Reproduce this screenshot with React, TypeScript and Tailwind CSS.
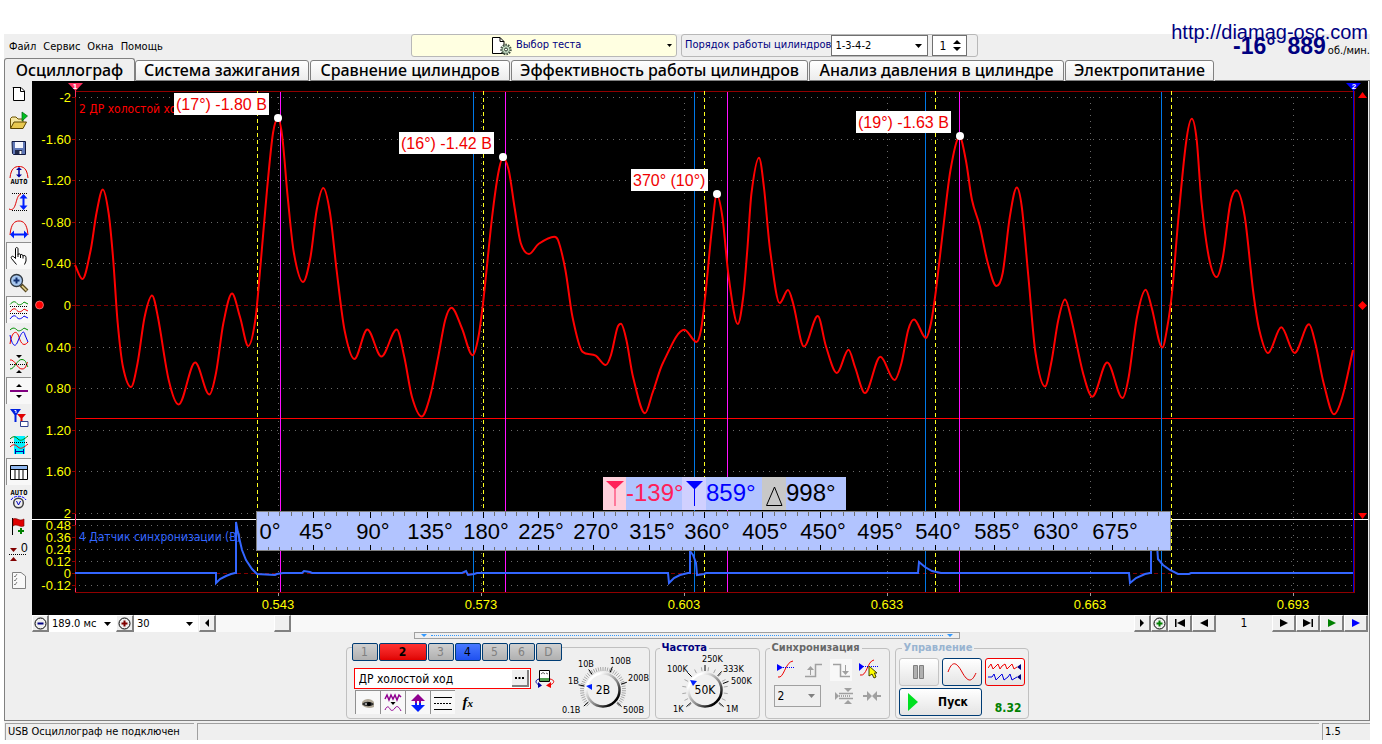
import React from "react";

const UI = "font-['DejaVu_Sans_Condensed','DejaVu_Sans',sans-serif]";

/* ---------- chart data ---------- */

type Pt = [number, number];

const PRESSURE: Pt[] = [
  [75, 265], [82.4, 279], [90.7, 250], [96.5, 213], [102.8, 189.5], [108.6, 213], [113, 257], [117.7, 323], [123, 367], [131, 387],
  [137.6, 363], [144.6, 317], [152, 295.5], [157.9, 317], [168.7, 380], [178.6, 404.5], [195.2, 362.5], [209.3, 394.5], [216, 373],
  [223.4, 323], [232, 293.5], [240, 317], [248.3, 346], [255.3, 320], [260.7, 263], [267, 190], [273, 133], [278, 119], [282.3, 137],
  [287.7, 197], [293.9, 253], [303, 282], [310.5, 257], [316.7, 210], [323.3, 188], [330, 213], [336.6, 270], [344.5, 330],
  [354.4, 359], [367.3, 329.5], [381.4, 356.5], [396.7, 329.5], [404.2, 356.5], [412, 397], [421.6, 416.5], [429.9, 397],
  [438.2, 357], [445.2, 320], [451.5, 307.7], [461.8, 328], [472.6, 355.3], [478.4, 337], [483.4, 300], [492.1, 217], [498.3, 173],
  [503, 158], [508.7, 170], [514.5, 207], [520.7, 243], [529, 254], [538.5, 244], [554.3, 236.7], [558, 240], [565.4, 270],
  [572.5, 317], [582.4, 351.7], [595.7, 355.7], [605.7, 365], [611, 355], [617.3, 328], [621, 323.7], [626.4, 340], [633, 376.7],
  [645, 413.3], [652.5, 393], [662.9, 363], [684.4, 329.7], [696.5, 342], [701, 330], [705.2, 296.7], [711.8, 230], [716.8, 195],
  [722.4, 217], [728.7, 277], [737.8, 324], [743.2, 297], [747.3, 250], [751.5, 193], [759, 157.7], [763.9, 187], [770.1, 250],
  [779.7, 303], [788, 290], [793, 303], [804, 346.5], [817.8, 316], [826, 346.5], [836.9, 373], [848.5, 349.7], [855, 367],
  [865, 393], [880.4, 356.7], [894.5, 380], [901.5, 363], [908.2, 330], [914, 319.5], [926, 338], [931, 323], [936, 290],
  [943, 230], [950.5, 170], [959.6, 137], [965.8, 160], [972, 200], [979.5, 225], [987.8, 263], [996.5, 286], [1002.7, 273],
  [1009.8, 217], [1016.8, 187.5], [1021.8, 207], [1028.4, 277], [1035.5, 353], [1045, 386.5], [1051.2, 363], [1058.3, 320],
  [1065, 299.5], [1071.5, 320], [1083, 373], [1092.3, 396.7], [1107.2, 362.5], [1122.5, 398], [1128.7, 377], [1137, 317],
  [1145.7, 289.7], [1151.5, 307], [1162.3, 347.5], [1167.3, 327], [1172.3, 290], [1178.5, 217], [1186, 143], [1191.8, 118.7],
  [1196.7, 140], [1201.3, 200], [1208.8, 257], [1216.6, 277], [1222.9, 257], [1230.3, 203], [1236.5, 190.3], [1244.8, 217],
  [1253, 290], [1259.3, 330], [1268, 353], [1281.3, 327.3], [1294.6, 353], [1309, 324.3], [1315.3, 343], [1323.6, 383],
  [1334, 414.3], [1342.3, 397], [1353, 350],
];

/* Monotone cubic interpolation: extrema stay exactly at the sampled points. */
function smooth(p: Pt[]): string {
  const n = p.length;
  const d: number[] = [];
  for (let i = 0; i < n - 1; i++) d.push((p[i + 1][1] - p[i][1]) / (p[i + 1][0] - p[i][0]));
  const m: number[] = [d[0]];
  for (let i = 1; i < n - 1; i++) {
    if (d[i - 1] * d[i] <= 0) {
      m.push(0);
      continue;
    }
    const mean = (p[i + 1][1] - p[i - 1][1]) / (p[i + 1][0] - p[i - 1][0]);
    const cap = 3 * Math.min(Math.abs(d[i - 1]), Math.abs(d[i]));
    m.push(Math.sign(mean) * Math.min(Math.abs(mean), cap));
  }
  m.push(d[n - 2]);
  let s = `M${p[0][0]} ${p[0][1]}`;
  for (let i = 0; i < n - 1; i++) {
    const h = (p[i + 1][0] - p[i][0]) / 3;
    s += `C${(p[i][0] + h).toFixed(1)} ${(p[i][1] + m[i] * h).toFixed(1)} ${(p[i + 1][0] - h).toFixed(1)} ${(p[i + 1][1] - m[i + 1] * h).toFixed(1)} ${p[i + 1][0]} ${p[i + 1][1]}`;
  }
  return s;
}

const SYNC =
  "75,573 216,573 216,583 220,579 226,576 231,574 235,573 236,573 236,522 238,533 242,550 246,560 252,569 257,574 275,575 277,574 283,573 302,573 304,571 310,572 312,573 462,573 466,571 468,575 474,574 477,573 668,573 669,583 674,578 680,575 688,573 690,573 690,551 693,555 696,563 697,575 704,574 706,573 918,573 919,562 925,567 932,571 941,573 1129,573 1130,583 1136,578 1145,574 1150,573 1151,573 1151,545 1157,545 1158,559 1163,565 1170,570 1178,574 1189,574 1191,573 1353,573";

const Y_MAIN: [string, number][] = [
  ["-2", 97], ["-1.60", 139], ["-1.20", 180], ["-0.80", 222], ["-0.40", 263], ["0", 305], ["0.40", 347], ["0.80", 388],
  ["1.20", 430], ["1.60", 471], ["2", 513],
];
const Y_SYNC: [string, number][] = [["0.48", 525], ["0.36", 537], ["0.24", 549], ["0.12", 561], ["0", 573], ["-0.12", 585]];
const X_AXIS: [string, number][] = [["0.543", 278], ["0.573", 481], ["0.603", 684], ["0.633", 887], ["0.663", 1090], ["0.693", 1293]];
const RULER = [257, 313, 370, 427, 483, 538, 593, 649, 704, 762, 820, 877, 935, 994, 1053, 1112, 1170];
const PEAKS = [
  { box: 174, top: 93, w: 95, text: "(17°) -1.80 В", cx: 278, cy: 118 },
  { box: 399, top: 132, w: 95, text: "(16°) -1.42 В", cx: 503, cy: 157 },
  { box: 631, top: 169, w: 77, text: "370° (10°)", cx: 717, cy: 194 },
  { box: 856, top: 111, w: 95, text: "(19°) -1.63 В", cx: 960, cy: 136 },
];

function Chart() {
  const f = "'Liberation Sans', sans-serif";
  return (
    <svg viewBox="32 81 1336 534" className="block h-auto w-full bg-black" role="img" aria-label="Осциллограмма" fontFamily={f}>
      <g shapeRendering="crispEdges" fill="none">
        <g stroke="#6a6a6a" strokeDasharray="1 5">
          {[...Y_MAIN, ...Y_SYNC].filter(([t]) => t !== "0").map(([t, y]) => (
            <path key={t + y} d={`M79 ${y}.5H1353`} />
          ))}
          {X_AXIS.map(([t, x]) => (
            <path key={t} d={`M${x}.5 97V592`} />
          ))}
        </g>
        <path d="M76 305.5H1353M76 573.5H1353" stroke="#800000" strokeDasharray="4 3" />
        <path d="M75.5 91V592.5H1354.5V91.5H75" stroke="#900000" />
        {[...Y_MAIN, ...Y_SYNC].map(([t, y]) => (
          <path key={t + y} d={`M72 ${y}.5H75`} stroke="#900000" />
        ))}
        {X_AXIS.map(([t, x]) => (
          <path key={t} d={`M${x}.5 593V596`} stroke="#a0a0a0" />
        ))}
        <path d="M32 519.5H1368" stroke="#fff" />
        <path d="M75.5 514V525M75.5 588V592M75.5 90V97" stroke="#ff3060" />
        <path d="M1353.5 90V592" stroke="#0000e0" />
      </g>
      <g fontSize="13" fill="#ffff00" textAnchor="end">
        {Y_MAIN.map(([t, y]) => (
          <text key={t} x="71" y={y + 5}>{t}</text>
        ))}
        {Y_SYNC.map(([t, y]) => (
          <text key={t} x="71" y={y + 5}>{t}</text>
        ))}
      </g>
      <g fontSize="13" fill="#ffff00" textAnchor="middle">
        {X_AXIS.map(([t, x]) => (
          <text key={t} x={x} y="609">{t}</text>
        ))}
      </g>
      <g fontSize="12" fontFamily="'DejaVu Sans Condensed', sans-serif">
        <text x="79" y="113" fill="#ff0000">2 ДР холостой ход (В)</text>
        <text x="79" y="541" fill="#3366ff">4 Датчик синхронизации (В)</text>
      </g>
      <path d="M76 418.5H1354" stroke="#ff0000" strokeWidth="1" shapeRendering="crispEdges" />
      <g shapeRendering="crispEdges">
        <path d="M473.5 92V592M694.5 92V592M925.5 92V592M1161.5 92V592" stroke="#0078e8" />
        <path d="M280.5 92V592M505.5 92V592M727.5 92V592M959.5 92V592" stroke="#ff10ff" />
        <path d="M257.5 91V592M483.5 91V592M704.5 91V592M935.5 91V592M1171.5 91V592" stroke="#ffff20" strokeDasharray="4 3" />
      </g>
      <path d={smooth(PRESSURE)} fill="none" stroke="#ff0000" strokeWidth="2" />
      <polyline points={SYNC} fill="none" stroke="#3366ff" strokeWidth="2" />

      {PEAKS.map((p) => (
        <g key={p.text}>
          <rect x={p.box} y={p.top} width={p.w} height="22" fill="#fff" />
          <text x={p.box + 2} y={p.top + 17} fontSize="16" fill="#f00000">{p.text}</text>
          <circle cx={p.cx} cy={p.cy} r="4" fill="#fff" />
        </g>
      ))}

      <rect x="256.5" y="511.5" width="914" height="39" fill="#b2c4ff" stroke="#808080" />
      <g shapeRendering="crispEdges" stroke="#707070">
        {RULER.slice(0, -1).map((x, i) =>
          [1, 2, 3, 4].map((k) => {
            const mx = Math.round(x + ((RULER[i + 1] - x) * k) / 5);
            return <path key={`${x}-${k}`} d={`M${mx}.5 512V516M${mx}.5 547V550`} />;
          }),
        )}
        {RULER.slice(1, -1).map((x) => (
          <path key={x} d={`M${x}.5 512V518M${x}.5 545V550`} stroke="#000" />
        ))}
      </g>
      <g fontSize="22" textAnchor="middle">
        {RULER.slice(0, -1).map((x, i) => (
          <text key={x} x={i === 0 ? 270 : x + 3} y="539">{i * 45}°</text>
        ))}
      </g>

      <rect x="603" y="477" width="243" height="33" fill="#b2c4ff" />
      <rect x="603" y="477" width="23" height="33" fill="#ffd0dc" />
      <text x="626" y="501" fontSize="24" fill="#ff2058">-139°</text>
      <rect x="682" y="477" width="24" height="33" fill="#d0d0ff" />
      <rect x="762" y="477" width="24" height="33" fill="#c8c8c8" />
      <path d="M606 481H624L615.5 489V506H614.5V489Z" fill="#ff2058" />
      <path d="M686 481H703L695 489V506H694V489Z" fill="#0000ff" />
      <path d="M774.5 487L782 505.5H766.5Z" fill="none" stroke="#000" />
      <text x="706" y="501" fontSize="24" fill="#0000ff">859°</text>
      <text x="786" y="501" fontSize="24">998°</text>

      <path d="M68 83H83L75.5 91Z" fill="#ff3060" />
      <path d="M1346 83H1361L1353.5 91Z" fill="#0000ff" />
      <g fontSize="8" fontWeight="bold" fill="#fff" textAnchor="middle">
        <text x="75" y="89">1</text>
        <text x="1354" y="89">2</text>
      </g>
      <path d="M1358 98H1367L1362.5 92ZM1358 513H1367L1362.5 519ZM1362.5 301L1367 305.5L1362.5 310L1358 305.5Z" fill="#ff0000" />
      <circle cx="39.5" cy="305" r="4" fill="#ff0000" stroke="#ff9090" strokeWidth="0.7" />
    </svg>
  );
}

/* ---------- icons ---------- */

function Ico({ children, w = 20, h = 20 }: { children: React.ReactNode; w?: number; h?: number }) {
  return (
    <svg width={w} height={h} viewBox={`0 0 ${w} ${h}`} fill="none" aria-hidden="true">
      {children}
    </svg>
  );
}

const hump = "M1 16C2 4 6 2 10 2S18 4 19 16";
const autoText = (y: number) => (
  <text x="10" y={y} fontSize="7" fontWeight="bold" textAnchor="middle" fill="#000" fontFamily="'DejaVu Sans Mono', monospace">AUTO</text>
);

const TOOLS: { name: string; on?: boolean; icon: React.ReactNode }[] = [
  { name: "Новый", icon: <Ico><path d="M4 3.5H12L15.5 7V16.5H4.500V3Z" fill="#fff" stroke="#000" /><path d="M11.500 3V7.500H16" stroke="#000" /></Ico> },
  { name: "Открыть", icon: <Ico><path d="M1.5 17V7.5L3 6H7L9 8H14V11" fill="#f6e7a0" stroke="#6b5200" /><path d="M1.5 17.5L5 11H17.5L14 17.5Z" fill="#e8c850" stroke="#5a4400" /><path d="M13 1L18.5 5L13 10Z" fill="#00c020" stroke="#006010" strokeWidth=".7" /></Ico> },
  { name: "Сохранить", icon: <Ico><path d="M3 3.5H16.5V16.5H4.5L3.5 15.5Z" fill="#6078b8" stroke="#101840" /><path d="M6 4H14V10H6Z" fill="#f4f6ff" /><path d="M6 12H13V16H6Z" fill="#202848" /><path d="M10.5 13H12.5V16H10.5Z" fill="#fff" /></Ico> },
  { name: "Автомасштаб", icon: <Ico><path d="M1 13C2 3 6 1.5 10 1.5S18 3 19 13" stroke="#e00000" /><path d="M10 3V11" stroke="#0000a0" strokeWidth="1.5" /><path d="M7 5L10 2L13 5ZM7 9.5L10 12.5L13 9.5Z" fill="#0000a0" />{autoText(19)}</Ico> },
  { name: "Масштаб по вертикали", icon: <Ico><path d="M3 1.5H18M3 18.5H18" stroke="#000" strokeDasharray="1 1" /><path d="M0 17C8 21 6 3 12 2" stroke="#e00000" /><path d="M14.5 4V16" stroke="#0020ff" strokeWidth="2" /><path d="M10.5 6.5L14.5 2L18.5 6.5ZM10.5 13.5L14.5 18L18.5 13.5Z" fill="#0020ff" /></Ico> },
  { name: "Масштаб по горизонтали", icon: <Ico><path d={hump} stroke="#e00000" /><path d="M4 15.5H16" stroke="#0020ff" strokeWidth="2" /><path d="M5 11.5L1 15.5L5 19.5ZM15 11.5L19 15.5L15 19.5Z" fill="#0020ff" /></Ico> },
  { name: "Рука", on: true, icon: <Ico><path d="M7.5 18.5L2.5 12.5C1.5 10.5 3.5 9.5 5 11L6.5 12.5V3C6.5 1 9 1 9 3V8.5C9 7.5 11.5 7.5 11.5 9C12 8 14 8.500 14 10C15 9 17 9.5 17 11.5V15L15.5 18.5" fill="#fff" stroke="#000" /><path d="M9 8V11M11.5 9V12M14 10V12.5" stroke="#000" /></Ico> },
  { name: "Лупа", icon: <Ico><path d="M12 12L18 18" stroke="#5a4a20" strokeWidth="4" /><path d="M13 13L17.5 17.5" stroke="#e8d890" strokeWidth="1.5" /><circle cx="7.5" cy="7.5" r="6" fill="#a8c8f0" stroke="#303840" strokeWidth="1.3" /><path d="M4.5 7.5H10.5M7.5 4.5V10.5" stroke="#103070" strokeWidth="2" /></Ico> },
  { name: "Раздельные графики", on: true, icon: <Ico><path d="M1 4.500C4 1 6 1 8 3.500S13 4.500 15 2L19 4" stroke="#009000" /><path d="M1 12C4 8 6 8 8 10.500S13 11.500 15 9L19 11" stroke="#f00000" /><path d="M1 19C4 15 6 15 8 17.500S13 18.500 15 16L19 18" stroke="#0000f0" /><path d="M1 6.500H19M1 13.500H19" stroke="#000" strokeDasharray="1 1" /></Ico> },
  { name: "Совмещённые графики", icon: <Ico><path d="M1 3C4 0 6 1 8 3S13 3 15 1L19 3" stroke="#009000" /><path d="M1 17C3 3 8 3 10 10S15 20 19 15" stroke="#f00000" /><path d="M1 8C3 18 6 22 9 14S15 2 16 8L19 15" stroke="#0000f0" /></Ico> },
  { name: "Центрировать", icon: <Ico><path d="M7 1H13L10 4ZM7 19H13L10 16Z" fill="#000" /><path d="M1 15C6 15 8 5 13 5.500S17 11 19 13" stroke="#009000" /><path d="M1 6C6 5 8 15 13 15S17 9 19 8" stroke="#f00000" /><path d="M1 10.5H19" stroke="#000" strokeDasharray="1 1" /></Ico> },
  { name: "Линия уровня", on: true, icon: <Ico><path d="M1 10H19" stroke="#800080" strokeWidth="2" /><path d="M7 6H13L10 3ZM7 14H13L10 17Z" fill="#000" /></Ico> },
  { name: "Маркеры", icon: <Ico><path d="M1 1H12L7.5 7V14H5.5V7Z" fill="#0020e0" /><path d="M8 6H17L13.5 10V15H11.5V10Z" fill="#e00000" /><path d="M5.500 2.500H7V5" stroke="#fff" /><path d="M11.5 13.5H19V18.5H11.5Z" fill="#fff" stroke="#304090" /></Ico> },
  { name: "Диапазон", icon: <Ico><path d="M5 1H16V19H5Z" fill="#00f0ff" /><path d="M1 4C4 1 6 1 9 4S15 4 19 1" stroke="#008000" /><path d="M1 12C4 9 6 9 9 12S15 12 19 9" stroke="#f00000" /><path d="M1 7.5H19" stroke="#000" strokeDasharray="1 1" /><path d="M6 16.5H15M6.5 14V19M14.5 14V19" stroke="#0000a0" /></Ico> },
  { name: "Таблица", on: true, icon: <Ico><path d="M1.5 3.5H18.5V17.5H1.5Z" fill="#fff" stroke="#000" /><path d="M2 4H18V7H2Z" fill="#90b8f0" /><path d="M1 7.5H19M6 7V18M10 7V18M14 7V18" stroke="#000" /></Ico> },
  { name: "Авто", icon: <Ico>{autoText(6)}<circle cx="9.5" cy="14" r="4.800" stroke="#404040" strokeWidth="1.5" /><path d="M7.5 12L9.5 16L11.5 12" stroke="#0000c0" /><path d="M2 11C5 6 14 6 17 11" stroke="#0000ff" strokeDasharray="3 1" /></Ico> },
  { name: "Добавить метку", icon: <Ico><path d="M3.5 2V19" stroke="#000" /><path d="M4 3C8 1 10 6 15 3V10C11 12 8 7 4 10Z" fill="#e00000" stroke="#700000" strokeWidth=".6" /><path d="M9 15H15M12 12V18" stroke="#008000" strokeWidth="2" /></Ico> },
  { name: "Обнулить", icon: <Ico><path d="M1 5H8L4.5 9ZM1 18H8L4.5 14Z" fill="#800000" /><path d="M0 11.5H18" stroke="#000" strokeDasharray="1 1" /><text x="12" y="9" fontSize="12" fill="#000" fontFamily="'Liberation Sans', sans-serif">0</text></Ico> },
  { name: "Отчёт", icon: <Ico><path d="M3.5 2.5H12L16.5 6V18.5H3.5Z" fill="#f8f8f8" stroke="#808080" /><path d="M5 6L6 7L8 4M5 10L6 11L8 8M5 14L6 15L8 12" stroke="#808080" /></Ico> },
];

function Tri({ dir = "down", fill = "#000", w = 8, h = 4 }: { dir?: string; fill?: string; w?: number; h?: number }) {
  const d = dir === "down" ? `M0 0H${w}L${w / 2} ${h}Z` : dir === "right" ? `M0 0L${w} ${h / 2}L0 ${h}Z` : dir === "up" ? `M0 ${h}H${w}L${w / 2} 0Z` : `M${w} 0L0 ${h / 2}L${w} ${h}Z`;
  return (
    <svg width={w} height={h} viewBox={`0 0 ${w} ${h}`} aria-hidden="true" className="shrink-0">
      <path d={d} fill={fill} />
    </svg>
  );
}

function Drop({ label, value, box, text = "text-[11px]", arrow = "#000", disabled = false }: { label: string; value: string; box: string; text?: string; arrow?: string; disabled?: boolean }) {
  return (
    <label className={`relative flex shrink-0 items-center ${box}`}>
      <span className="sr-only">{label}</span>
      <select disabled={disabled} className={`size-full appearance-none bg-transparent pl-[3px] leading-[15px] text-black opacity-100 ${text}`}>
        <option>{value}</option>
      </select>
      <span className="pointer-events-none absolute right-[5px]">
        <Tri fill={arrow} w={7} h={4} />
      </span>
    </label>
  );
}

function Raised({ label, w, children }: { label: string; w: string; children: React.ReactNode }) {
  return (
    <button aria-label={label} className={`flex h-[17px] shrink-0 items-center justify-center border-t border-r-2 border-b-2 border-l border-t-white border-r-[#808080] border-b-[#808080] border-l-white bg-[#efefef] ${w}`}>
      {children}
    </button>
  );
}

/* ---------- bottom panel ---------- */

function Knob({ label, value, marks, w, cx, fine }: { label: string; value: string; marks: [string, number, number, number][]; w: number; cx: number; fine: boolean }) {
  const count = fine ? 45 : 16;
  const id = fine ? "volt" : "freq";
  return (
    <svg width={w} height="64" viewBox={`0 0 ${w} 64`} role="img" aria-label={label} fontFamily="'DejaVu Sans Condensed', sans-serif">
      <defs>
        <linearGradient id={id} x1="0" y1="0" x2="1" y2="1">
          <stop offset="0.2" stopColor="#ffffff" />
          <stop offset="0.6" stopColor="#808080" />
          <stop offset="0.85" stopColor="#000000" />
        </linearGradient>
      </defs>
      {Array.from({ length: count }, (_, i) => {
        const a = ((-225 + (270 * i) / (count - 1)) * Math.PI) / 180;
        return (
          <path
            key={i}
            d={`M${(cx + 19 * Math.cos(a)).toFixed(1)} ${(36 + 19 * Math.sin(a)).toFixed(1)}L${(cx + 23 * Math.cos(a)).toFixed(1)} ${(36 + 23 * Math.sin(a)).toFixed(1)}`}
            stroke="#a8a8a8"
          />
        );
      })}
      {marks.map(([t, x, y, deg]) => {
        const a = (deg * Math.PI) / 180;
        return (
          <g key={t}>
            <path d={`M${(cx + 19 * Math.cos(a)).toFixed(1)} ${(36 + 19 * Math.sin(a)).toFixed(1)}L${(cx + 25 * Math.cos(a)).toFixed(1)} ${(36 + 25 * Math.sin(a)).toFixed(1)}`} stroke="#000" />
            <text x={x} y={y} fontSize="9">{t}</text>
          </g>
        );
      })}
      <circle cx={cx} cy="36" r="16.5" fill="#f0f0f0" stroke={`url(#${id})`} strokeWidth="2.5" />
      <path d={fine ? `M${cx - 17} 32L${cx - 11} 30V36Z` : `M${cx - 15} 26L${cx - 8} 27L${cx - 12} 32Z`} fill="#0020ff" />
      <text x={cx} y="40" fontSize="12" textAnchor="middle">{value}</text>
    </svg>
  );
}

const CH_BASE = "h-[18px] border border-[#003c74] text-[12px] leading-[15px] rounded-[2px]";
const CHANNELS: [string, string][] = [
  ["1", "w-[26px] bg-linear-to-b from-[#d0d0d0] to-[#b0b0b0] text-[#808080]"],
  ["2", "w-[48px] bg-linear-to-b from-[#ff3030] to-[#e00000] font-bold text-black"],
  ["3", "w-[26px] bg-linear-to-b from-[#d0d0d0] to-[#b0b0b0] text-[#808080]"],
  ["4", "w-[26px] bg-linear-to-b from-[#4878ff] to-[#2050f0] text-black"],
  ["5", "w-[26px] bg-linear-to-b from-[#d0d0d0] to-[#b0b0b0] text-[#808080]"],
  ["6", "w-[26px] bg-linear-to-b from-[#d0d0d0] to-[#b0b0b0] text-[#808080]"],
  ["D", "w-[26px] bg-linear-to-b from-[#d0d0d0] to-[#b0b0b0] text-[#808080]"],
];

const GROUP = "shrink-0 rounded-[4px] border border-[#c0c0c0]";
const SUNK = "flex h-6 w-[25px] items-center justify-center border-t border-l border-t-[#909090] border-l-[#909090] bg-[#f8f8f8]";

function ChannelGroup() {
  return (
    <section className={`flex h-[72px] w-[304px] justify-between ${GROUP}`}>
      <div className="-mt-[5px] ml-[5px] w-[217px]">
        <div className="flex gap-px bg-[#efefef]">
          {CHANNELS.map(([n, c]) => (
            <button key={n} className={`${CH_BASE} ${c}`}>{n}</button>
          ))}
        </div>
        <div className="mt-[7px] ml-0.5 flex items-center gap-1">
          <div className="flex h-[21px] w-[177px] items-center border border-[#ff0000] bg-white p-px">
            <input aria-label="Название канала" defaultValue="ДР холостой ход" className="min-w-0 flex-1 px-[3px] text-[12px] leading-4" />
            <button aria-label="Выбрать" className="flex size-[17px] items-center justify-center gap-px border-r-2 border-b-2 border-[#808080] bg-[#efefef]">
              <Ico w={9} h={2}><path d="M0 0H2V2H0ZM3.5 0H5.5V2H3.5ZM7 0H9V2H7Z" fill="#000" /></Ico>
            </button>
          </div>
          <button aria-label="Подключение">
            <Ico><path d="M4.5 1.5H14.5V12.5H4.5Z" fill="#fff" stroke="#000" /><path d="M5 9H14V12H5Z" fill="#50a050" /><path d="M6 5L8 3.5L10 5M11 4L13 5" stroke="#606060" /><path d="M4 10C0 11 0 14 4 16" stroke="#0000a0" /><path d="M3 13L7 16.5L3 19Z" fill="#0000a0" /><path d="M15 10C20 11 20 14 15 16" stroke="#f00000" /><path d="M16 13L11 16.5L16 19Z" fill="#f00000" /></Ico>
          </button>
        </div>
        <div className="mt-px ml-[3px] flex items-center">
          <button aria-label="Видимость" className={SUNK}>
            <Ico><path d="M4 9C7 5 13 5 16 9V14C12 16 7 15 4 12Z" fill="#b0a898" /><path d="M4 11C7 8 12 8 16 11C13 14 7 14 4 11Z" fill="#303030" /><circle cx="11" cy="11" r="2" fill="#000" /><path d="M7 11H9" stroke="#fff" /></Ico>
          </button>
          <button aria-label="Фильтр" className={SUNK}>
            <Ico><path d="M2 6L4 2L6 7L8 2L10 6L12 2L14 7L16 2L18 4" stroke="#900090" strokeWidth="1.5" /><path d="M7.5 9H12.5L10 12Z" fill="#000" /><path d="M2 17C4 12 6 14 7 16S10 18 12 15S16 14 18 18" stroke="#900090" /></Ico>
          </button>
          <button aria-label="Инверсия" className={SUNK}>
            <Ico><path d="M10 1L17 8H3Z" fill="#900090" /><path d="M10 19L17 12H3Z" fill="#0020ff" /><path d="M8 7V10M12 7V10" stroke="#900090" strokeWidth="2" /><path d="M8 10V13M12 10V13" stroke="#0020ff" strokeWidth="2" /></Ico>
          </button>
          <button aria-label="Уровни" className={SUNK}>
            <Ico><path d="M1 4.5H19M1 16.5H19" stroke="#000" /><path d="M1 10.5H19" stroke="#000" strokeDasharray="2 1" /></Ico>
          </button>
          <button aria-label="Формула" className="ml-2 font-['Liberation_Serif',serif] text-[15px] leading-4 font-bold italic">
            f<span className="text-[11px]">x</span>
          </button>
        </div>
      </div>
      <div className="flex shrink-0 items-end">
        <Knob
          label="Вольт"
          value="2В"
          fine
          w={90}
          cx={41}
          marks={[["10В", 16, 13, -125], ["100В", 48, 10, -68], ["200В", 66, 27, -18], ["500В", 61, 59, 42], ["1В", 6, 30, -168], ["0.1В", 0, 59, 140]]}
        />
      </div>
    </section>
  );
}

const LEGEND = "px-0.5 text-[11px] leading-3 font-bold";
const DISABLED = "#a0a0a0";

function SyncGroup() {
  const dis = { stroke: DISABLED };
  return (
    <fieldset className={`h-[77px] w-[125px] px-2 ${GROUP}`}>
      <legend className={`${LEGEND} -ml-1 text-[#686868]`}>Синхронизация</legend>
      <div className="mt-[5px] grid grid-cols-4 gap-1.5">
        <button aria-label="Синхронизация по уровню"><Ico w={22} h={22}><path d="M4 18C10 20 11 3 19 2" stroke="#f00000" /><path d="M3 8.5H20" stroke="#0000ff" strokeDasharray="1 1" /><path d="M3 5L9 8.5L3 12Z" fill="#0000ff" /></Ico></button>
        <button aria-label="Фронт"><Ico w={22} h={22}><path d="M3 17.5H13.5V5.5H20" {...dis} strokeWidth="1.5" /><path d="M8.5 16V9" {...dis} /><path d="M5 11H12L8.5 7Z" fill={DISABLED} /></Ico></button>
        <button aria-label="Спад" className="bg-[#f8f8f8]"><Ico w={22} h={22}><path d="M3 5.5H10.5V17.5H20" {...dis} strokeWidth="1.5" /><path d="M15.5 6V13" {...dis} /><path d="M12 12H19L15.5 16Z" fill={DISABLED} /></Ico></button>
        <button aria-label="Выбор уровня"><Ico w={22} h={22}><path d="M2 16C9 18 9 2 16 1" stroke="#f00000" /><path d="M3 7.5H20" stroke="#0000ff" strokeDasharray="1 1" /><path d="M1 4L6 7.5L1 12Z" fill="#0000ff" /><path d="M11 7V17L14 15L16 19L18 18L16.5 14H19Z" fill="#ffff00" stroke="#404000" /></Ico></button>
      </div>
      <div className="mt-1 flex items-center gap-2.5">
        <Drop label="Канал синхронизации" value="2" disabled arrow="#808080" text="text-[12px]" box="h-[22px] w-[47px] border border-[#a0a0a0]" />
        <button aria-label="Интервал" className="ml-auto"><Ico w={18} h={18}><path d="M0 5L4 9L0 13Z" fill={DISABLED} /><path d="M4 6.5H18M4 11.5H18" {...dis} strokeWidth="1.5" /><path d="M4 9H16" stroke="#606060" strokeDasharray="1 1" /><path d="M9 1H17L13 5ZM9 17H17L13 13Z" fill={DISABLED} /></Ico></button>
        <button aria-label="Сжать"><Ico w={18} h={18}><path d="M0 9H4M14 9H18" {...dis} strokeWidth="2" /><path d="M4 4L9 9L4 14ZM14 4L9 9L14 14Z" fill={DISABLED} /></Ico></button>
      </div>
    </fieldset>
  );
}

const CTRL = "flex h-7 items-center justify-center rounded-[3px] border bg-linear-to-b from-white to-[#e4e4e4]";

function ControlGroup() {
  return (
    <fieldset className={`h-[77px] w-[134px] px-[3px] ${GROUP}`}>
      <legend className={`${LEGEND} ml-[3px] text-[#99b4d1]`}>Управление</legend>
      <div className="mt-1 flex gap-[3px]">
        <button aria-label="Пауза" className={`w-10 border-[#c4c4c4] ${CTRL}`}><Ico w={12} h={16}><path d="M.5 1.5H4.5V14.5H.5ZM6.5 1.5H10.5V14.5H6.5Z" fill="#b0b0b0" stroke="#808080" /></Ico></button>
        <button aria-label="Синусоида" className={`w-10 border-[#003c74] ${CTRL}`}><Ico w={30} h={20}><path d="M1 10C5 -1 9 -1 15 10S25 20 29 11" stroke="#e00000" /></Ico></button>
        <button aria-label="Осциллограф" className={`w-10 border-[#f00000] ${CTRL}`}><Ico w={34} h={20}><path d="M0 6L3 2L5 7L8 4L10 2L12 7L14 4L17 2L19 7L22 4L24 2L26 7L29 5" stroke="#f00000" /><path d="M0 15H4L6 12L8 18L11 15L14 12L16 18L20 15L22 12L24 18L29 15" stroke="#0000e0" /><path d="M33 2V8L29 5ZM33 12V18L29 15Z" fill="#000080" /></Ico></button>
      </div>
      <div className="mt-0.5 flex items-center justify-between">
        <button className={`w-[83px] gap-5 pr-1 text-[12px] font-bold border-[#003c74] ${CTRL}`}>
          <Tri dir="right" fill="#00e020" w={10} h={18} />
          Пуск
        </button>
        <output className="mt-3 mr-[3px] text-[12px] leading-3 font-bold text-[#008000]">8.32</output>
      </div>
    </fieldset>
  );
}

/* ---------- page ---------- */

const TABS: [string, string][] = [
  ["Система зажигания", "w-[174px]"],
  ["Сравнение цилиндров", "w-[200px]"],
  ["Эффективность работы цилиндров", "w-[297px]"],
  ["Анализ давления в цилиндре", "w-[255px]"],
  ["Электропитание", "w-[149px]"],
];

export default function App() {
  return (
    <div className={`min-h-screen bg-white pt-[34px] pr-3 pl-1 text-[11px] text-black ${UI}`}>
      <div className="relative bg-[#efefef]">
        <header className="flex h-6 items-start">
          <nav className="flex w-[407px] gap-[7px] px-[5px] pt-1.5 leading-[14px]">
            <button>Файл</button>
            <button>Сервис</button>
            <button>Окна</button>
            <button>Помощь</button>
          </nav>
          <button className="flex h-[23px] w-[266px] items-center gap-1 rounded-[3px] border border-[#b8b8b8] bg-[#ffffe1] pr-1 pl-20 text-[#000080]">
            <Ico w={20} h={20}>
              <path d="M.5 1.5H8L12 5.5V17.5H.5Z" fill="#fff" stroke="#000" />
              <path d="M8 1.500V5.500H12" stroke="#000" />
              <circle cx="14" cy="13.5" r="4.5" fill="#c8e0c8" stroke="#405040" strokeWidth="2.5" strokeDasharray="1.5 1" />
              <circle cx="14" cy="13.5" r="1.5" fill="#fff" stroke="#203020" />
            </Ico>
            <span className="flex-1 text-left">Выбор теста</span>
            <Tri w={5} h={3} />
          </button>
          <div className="ml-1 flex h-[23px] w-[297px] items-center gap-1 rounded-[3px] border border-[#b8b8b8] pl-[3px]">
            <div className="flex items-center">
              <span className="whitespace-nowrap text-[#000080]">Порядок работы цилиндров</span>
              <Drop label="Порядок работы цилиндров" value="1-3-4-2" box="h-[21px] w-[97px] border border-[#707070] bg-white" />
            </div>
            <label className="flex h-[21px] w-[35px] items-center border border-[#707070] bg-white pr-[5px]">
              <span className="sr-only">Цилиндр</span>
              <input defaultValue="1" className="w-full min-w-0 pl-1.5 text-[12px] leading-4" />
              <span className="flex flex-col gap-[3px]">
                <Tri dir="up" />
                <Tri />
              </span>
            </label>
          </div>
          <div className="ml-auto flex items-baseline font-['Liberation_Sans',sans-serif] text-[23px] leading-6 font-bold text-[#000080]">
            <span className="mr-3">-16°</span>
            <span>889</span>
            <span className={`ml-0.5 text-[11px] font-normal text-black ${UI}`}>об./мин.</span>
          </div>
        </header>
        <a href="http://diamag-osc.com" className="absolute -top-3 right-0.5 font-['Liberation_Sans',sans-serif] text-[20px] leading-5 text-[#000080]">
          http://diamag-osc.com
        </a>

        <div role="tablist" className="flex h-[23px] items-end gap-px font-['Noto_Sans',sans-serif] font-medium">
          <button role="tab" aria-selected="true" className="-mr-px h-[23px] w-[131px] rounded-t-[3px] border-t border-r border-l border-[#808080] bg-[#efefef] text-[16px] leading-[22px] whitespace-nowrap">
            Осциллограф
          </button>
          {TABS.map(([t, w]) => (
            <button key={t} role="tab" aria-selected="false" className={`h-[21px] rounded-t-[3px] border border-[#808080] bg-linear-to-b from-white to-[#ececec] text-[16px] leading-[19px] whitespace-nowrap ${w}`}>
              {t}
            </button>
          ))}
          <div className="flex-1 self-end border-b border-[#808080]" />
        </div>

        <main className="border-r border-b border-l border-[#808080] px-px">
          <div className="flex">
            <div role="toolbar" className="-mt-px flex w-[26px] shrink-0 flex-col pr-px">
              {TOOLS.map((t) => (
                <button
                  key={t.name}
                  aria-label={t.name}
                  aria-pressed={!!t.on}
                  className={`flex h-[27px] items-center justify-center ${t.on ? "border-t border-l border-[#909090] bg-[#f8f8f8]" : ""}`}
                >
                  {t.icon}
                </button>
              ))}
            </div>
            <div className="min-w-0 flex-1">
              <Chart />
              <div className="flex h-[17px]">
                <Raised label="Уменьшить" w="w-[17px]"><Ico w={13} h={13}><circle cx="6.5" cy="6.5" r="5.5" stroke="#000" /><path d="M3.5 6.5H9.5" stroke="#000080" strokeWidth="2" /></Ico></Raised>
                <Drop label="Развёртка" value="189.0 мс" box="h-[17px] w-[67px] bg-white" />
                <Raised label="Увеличить" w="w-[18px]"><Ico w={13} h={13}><circle cx="6.5" cy="6.5" r="5.5" stroke="#000" /><path d="M3.5 6.5H9.5M6.5 3.5V9.5" stroke="#800000" strokeWidth="2" /></Ico></Raised>
                <Drop label="Количество" value="30" box="h-[17px] w-[64px] bg-white mr-px" />
                <Raised label="Назад" w="w-[17px]"><Tri dir="left" w={4} h={8} /></Raised>
                <div className="flex-1 bg-[#f8f8f8] pl-[58px]">
                  <Raised label="Ползунок" w="w-[17px]">{null}</Raised>
                </div>
                <Raised label="Вперёд" w="w-[17px]"><Tri dir="right" w={4} h={8} /></Raised>
                <Raised label="Добавить" w="w-[17px]"><Ico w={13} h={13}><circle cx="6.5" cy="6.5" r="5.5" stroke="#000" /><path d="M3.5 6.5H9.5M6.5 3.5V9.5" stroke="#008000" strokeWidth="2" /></Ico></Raised>
                <Raised label="В начало" w="w-6"><Ico w={10} h={8}><path d="M0 0H1.5V8H0ZM10 0V8L2 4Z" fill="#000" /></Ico></Raised>
                <Raised label="Предыдущий" w="w-6"><Tri dir="left" w={8} h={8} /></Raised>
                <span className="w-14 text-center text-[12px] leading-[17px]">1</span>
                <Raised label="Следующий" w="w-6"><Tri dir="right" w={8} h={8} /></Raised>
                <Raised label="В конец" w="w-6"><Ico w={10} h={8}><path d="M8.5 0H10V8H8.5ZM0 0V8L8 4Z" fill="#000" /></Ico></Raised>
                <Raised label="Воспроизвести" w="w-6"><Tri dir="right" fill="#008000" w={8} h={8} /></Raised>
                <Raised label="Воспроизвести всё" w="w-6"><Tri dir="right" fill="#0000ff" w={8} h={8} /></Raised>
              </div>
            </div>
          </div>

          <div className="mx-auto flex h-[7px] w-[546px] items-center justify-between border border-[#a0a0a0] px-1.5">
            <Tri w={6} h={3} fill="#3399ff" />
            <span className="mx-1 flex-1 border-t border-dotted border-[#3399ff]" />
            <Tri w={6} h={3} fill="#3399ff" />
          </div>

          <div className="flex items-end justify-center gap-[5px] pt-[3px] pb-px">
            <ChannelGroup />
            <fieldset className={`h-[77px] w-[105px] ${GROUP}`}>
              <legend className={`${LEGEND} ml-1 text-[#000080]`}>Частота</legend>
              <Knob
                label="Частота"
                value="50K"
                fine={false}
                w={102}
                cx={49}
                marks={[["250K", 46, 8, -90], ["100K", 11, 18, -135], ["333K", 67, 18, -48], ["500K", 75, 30, -20], ["1M", 70, 58, 42], ["1K", 17, 58, 138]]}
              />
            </fieldset>
            <SyncGroup />
            <ControlGroup />
          </div>
        </main>

        <footer className="mt-0.5 flex h-[17px] gap-[3px] pl-px leading-4">
          <span className="w-[189px] border-t border-l border-[#a0a0a0] pl-0.5 whitespace-nowrap">USB Осциллограф не подключен</span>
          <span className="flex-1 border-t border-l border-[#a0a0a0]" />
          <span className="w-12 border-t border-l border-[#a0a0a0] pl-0.5">1.5</span>
        </footer>
      </div>
    </div>
  );
}
